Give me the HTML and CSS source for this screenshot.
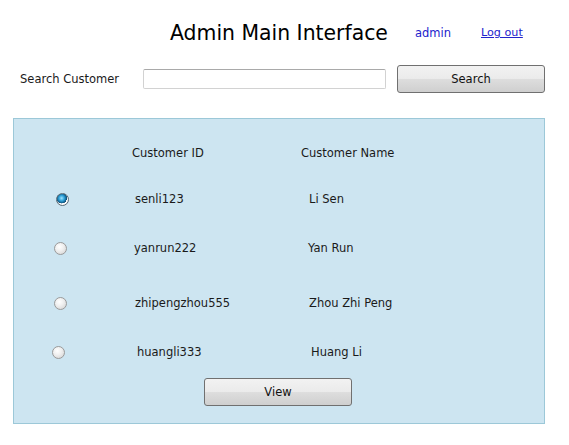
FILE: index.html
```html
<!DOCTYPE html>
<html lang="en">
<head>
<meta charset="utf-8">
<title>Admin Main Interface</title>
<link rel="stylesheet" href="styles.css">
</head>
<body>
<header class="top">
  <h1 class="title">Admin Main Interface</h1>
  <span class="user">admin</span>
  <a class="logout" href="#">Log out</a>
</header>
<form class="search">
  <label class="search-label" for="q">Search Customer</label>
  <input class="search-input" id="q" type="text">
  <button class="btn btn-search" type="button">Search</button>
</form>
<section class="panel">
  <div class="grid">
    <div class="row row-h">
      <span></span>
      <span class="head head-id">Customer ID</span>
      <span class="head head-name">Customer Name</span>
    </div>
    <div class="row row-1">
      <span class="cell-radio"><input class="radio r1" type="radio" name="c" checked></span>
      <span class="cell id1">senli123</span>
      <span class="cell n1">Li Sen</span>
    </div>
    <div class="row row-2">
      <span class="cell-radio"><input class="radio" type="radio" name="c"></span>
      <span class="cell">yanrun222</span>
      <span class="cell">Yan Run</span>
    </div>
    <div class="row row-3">
      <span class="cell-radio"><input class="radio" type="radio" name="c"></span>
      <span class="cell id1">zhipengzhou555</span>
      <span class="cell n1">Zhou Zhi Peng</span>
    </div>
    <div class="row row-4">
      <span class="cell-radio"><input class="radio r4" type="radio" name="c"></span>
      <span class="cell id4">huangli333</span>
      <span class="cell n4">Huang Li</span>
    </div>
  </div>
  <div class="actions">
    <button class="btn btn-view" type="button">View</button>
  </div>
</section>
</body>
</html>
```
FILE: styles.css
```css
html, body {
  margin: 0;
  padding: 0;
  background: #ffffff;
}
body {
  font-family: "DejaVu Sans", Verdana, sans-serif;
  font-size: 11.5px;
  color: #1a1a1a;
}
.top {
  display: flex;
  align-items: center;
  height: 65px;
  box-sizing: border-box;
  padding: 0 0 0 170px;
}
.title {
  margin: 0;
  font-size: 20.4px;
  font-weight: normal;
  line-height: 24px;
  color: #000;
}
.user {
  margin-left: 27px;
  color: #2222cc;
}
.logout {
  margin-left: 30px;
  font-size: 11.2px;
  color: #2222cc;
  text-decoration: underline;
}
.search {
  display: flex;
  align-items: center;
  height: 28px;
  margin: 0;
}
.search-label {
  width: 123px;
  padding-left: 20px;
}
.search-input {
  box-sizing: border-box;
  width: 243px;
  height: 20px;
  margin: 0;
  border: 1px solid #d2d2d2;
  border-top-color: #a9a9a9;
  border-radius: 2px;
  background: #fff;
  padding: 0 3px;
  font: inherit;
}
.btn {
  box-sizing: border-box;
  border: 1px solid #707070;
  border-radius: 3px;
  background: linear-gradient(#f2f2f2 0%, #ebebeb 48%, #dddddd 52%, #cfcfcf 100%);
  font-family: inherit;
  font-size: 11.5px;
  color: #111;
  padding: 0;
  cursor: pointer;
}
.btn-search {
  width: 148px;
  height: 28px;
  margin-left: 11px;
}
.panel {
  box-sizing: border-box;
  width: 532px;
  height: 306px;
  margin: 25px 0 0 13px;
  background: #cde5f1;
  border: 1px solid #9cc8d8;
  padding-top: 11px;
}
.grid {
  display: flex;
  flex-direction: column;
}
.row {
  display: grid;
  grid-template-columns: 120px 174px 1fr;
  align-items: center;
}
.row-h { height: 46px; }
.row-1 { height: 46px; }
.row-2 { height: 52px; }
.row-3 { height: 58px; }
.row-4 { height: 40px; }
.head-id { margin-left: -2px; }
.head-name { margin-left: -7px; }
.cell-radio {
  display: flex;
  padding-left: 40px;
}
.id1 { margin-left: 1px; }
.n1 { margin-left: 1px; }
.id4 { margin-left: 3px; }
.n4 { margin-left: 3px; }
.radio {
  appearance: none;
  -webkit-appearance: none;
  box-sizing: border-box;
  width: 13px;
  height: 13px;
  margin: 0;
  border-radius: 50%;
  border: 1px solid #9a9a9a;
  background: radial-gradient(circle at 40% 35%, #ffffff 0%, #f0f0f0 40%, #d0d0d0 100%);
}
.radio:checked {
  border-color: #5a6a74;
  background:
    radial-gradient(circle at 42% 38%, #9fe3ff 0%, #2c9fd6 30%, #0d4f78 55%, rgba(0,0,0,0) 58%),
    radial-gradient(circle, #ffffff 60%, #c8c8c8 100%);
}
.r1 { margin-left: 2px; }
.r4 { margin-left: -2px; }
.actions {
  display: flex;
  padding-left: 190px;
  margin-top: 6px;
}
.btn-view {
  width: 148px;
  height: 28px;
}
```
